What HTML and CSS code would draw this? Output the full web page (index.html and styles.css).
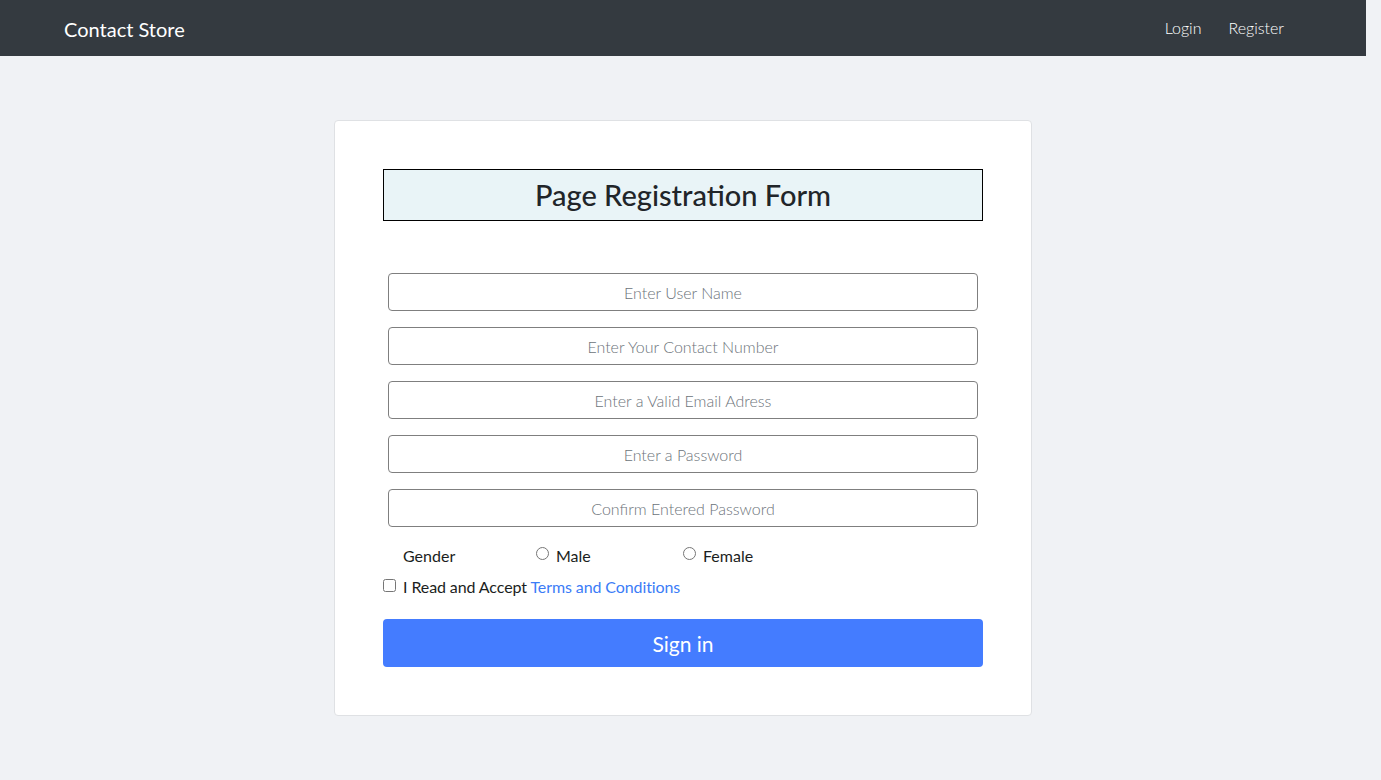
FILE: index.html
```html
<!DOCTYPE html>
<html lang="en">
<head>
<meta charset="utf-8">
<title>Contact Store</title>
<link rel="stylesheet" href="styles.css">
</head>
<body>
<nav class="navbar">
  <a class="brand" href="#">Contact Store</a>
  <div class="nav-links">
    <a href="#">Login</a>
    <a href="#">Register</a>
  </div>
</nav>
<main class="page">
  <section class="card">
    <h1 class="title">Page Registration Form</h1>
    <form class="form">
      <div class="fields">
        <input class="field" type="text" placeholder="Enter User Name">
        <input class="field" type="text" placeholder="Enter Your Contact Number">
        <input class="field" type="email" placeholder="Enter a Valid Email Adress">
        <input class="field" type="password" placeholder="Enter a Password">
        <input class="field" type="password" placeholder="Confirm Entered Password">
      </div>
      <div class="gender">
        <span class="gender-label">Gender</span>
        <label class="radio male"><input type="radio" name="g">Male</label>
        <label class="radio female"><input type="radio" name="g">Female</label>
      </div>
      <div class="terms"><input type="checkbox" id="terms"><label for="terms">I Read and Accept <a href="#">Terms and Conditions</a></label></div>
      <button class="submit" type="button">Sign in</button>
    </form>
  </section>
</main>
</body>
</html>
```

FILE: styles.css
```css
* { box-sizing: border-box; }
html, body { margin: 0; padding: 0; }
body {
  background: #f0f2f5;
  font-family: Lato, "Noto Sans", sans-serif;
  color: #212529;
  width: 1366px;
}
.navbar {
  height: 56px;
  background: #343a40;
  display: flex;
  align-items: center;
  justify-content: space-between;
  padding: 0 82px 0 64px;
}
.brand {
  color: #fff;
  text-decoration: none;
  font-size: 20px;
  margin-top: 2px;
}
.nav-links { display: flex; gap: 27px; margin-top: -1px; }
.nav-links a {
  color: #fff;
  text-decoration: none;
  font-size: 16px;
  font-weight: 300;
}
.page {
  display: flex;
  justify-content: center;
  padding: 64px 0;
}
.card {
  width: 698px;
  background: #fff;
  border: 1px solid #dfe1e4;
  border-radius: 4px;
  padding: 48px;
}
.title {
  margin: 0;
  height: 52px;
  border: 1px solid #000;
  background: #e9f4f7;
  font-size: 29px;
  font-weight: 500;
  text-align: center;
  line-height: 50px;
}
.form { display: flex; flex-direction: column; }
.fields {
  display: flex;
  flex-direction: column;
  gap: 16px;
  padding: 0 5px;
  margin-top: 52px;
}
.field {
  height: 38px;
  border: 1px solid #7f7f7f;
  border-radius: 4px;
  text-align: center;
  font-family: inherit;
  font-size: 16px;
  font-weight: 400;
  color: #495057;
}
.field::placeholder { color: #6c737a; font-weight: 300; }
.gender {
  display: flex;
  align-items: center;
  height: 24px;
  margin-top: 16px;
  font-size: 16px;
  color: #1b1e21;
}
.gender-label { margin-left: 20px; width: 133px; }
.radio { display: flex; align-items: center; gap: 7px; }
.radio input { margin: 0 0 3px; width: 13px; height: 13px; }
.male { width: 147px; }
.terms {
  display: flex;
  align-items: center;
  gap: 7px;
  height: 24px;
  margin-top: 7px;
  font-size: 16px;
  color: #1b1e21;
}
.terms input { margin: 0 0 2px; width: 13px; height: 13px; }
.terms label { letter-spacing: -0.1px; }
.terms a { color: #3b7cf7; text-decoration: none; }
.submit {
  margin-top: 21px;
  height: 48px;
  border: 0;
  border-radius: 4px;
  background: #447cff;
  color: #fff;
  font-family: inherit;
  font-size: 21px;
  font-weight: 400;
}
```
